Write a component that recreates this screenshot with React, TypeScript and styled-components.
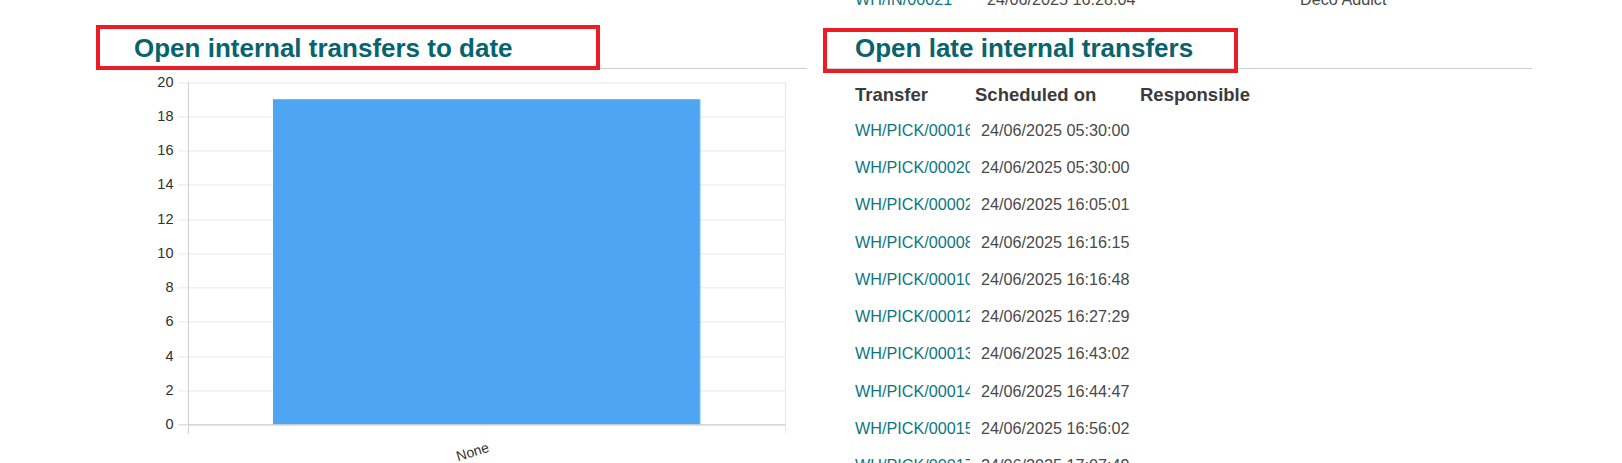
import styled, { createGlobalStyle } from "styled-components";

const GlobalStyle = createGlobalStyle`
  html, body {
    margin: 0;
    padding: 0;
    overflow: hidden;
    background: #fff;
  }
  body {
    font-family: "Liberation Sans", Arial, sans-serif;
    color: #444;
  }
`;

const TEAL = "#07646e";
const LINK = "#0b7782";

const transfers = [
  { ref: "WH/PICK/00016", date: "24/06/2025 05:30:00" },
  { ref: "WH/PICK/00020", date: "24/06/2025 05:30:00" },
  { ref: "WH/PICK/00002", date: "24/06/2025 16:05:01" },
  { ref: "WH/PICK/00008", date: "24/06/2025 16:16:15" },
  { ref: "WH/PICK/00010", date: "24/06/2025 16:16:48" },
  { ref: "WH/PICK/00012", date: "24/06/2025 16:27:29" },
  { ref: "WH/PICK/00013", date: "24/06/2025 16:43:02" },
  { ref: "WH/PICK/00014", date: "24/06/2025 16:44:47" },
  { ref: "WH/PICK/00015", date: "24/06/2025 16:56:02" },
  { ref: "WH/PICK/00017", date: "24/06/2025 17:07:49" },
];

export default function App() {
  return (
    <>
      <GlobalStyle />
      <Page>
        <div />
        <PrevRow>
          <Ref href="#">WH/IN/00021</Ref>
          <DateCell>24/06/2025 16:28:04</DateCell>
          <span>Deco Addict</span>
        </PrevRow>

        <Section>
          <Heading $indent={38}>Open internal transfers to date</Heading>
          <Highlight $top={7.5} $left={0} $w={504} $h={45} />
          <BarChart value={19} label="None" />
        </Section>

        <Section>
          <Heading $indent={33}>Open late internal transfers</Heading>
          <Highlight $top={10.5} $left={1} $w={415} $h={44.5} />
          <Table>
            <HeadRow>
              <span>Transfer</span>
              <span>Scheduled on</span>
              <span>Responsible</span>
            </HeadRow>
            {transfers.map((t) => (
              <BodyRow key={t.ref}>
                <Ref href="#">{t.ref}</Ref>
                <DateCell>{t.date}</DateCell>
                <span />
              </BodyRow>
            ))}
          </Table>
        </Section>
      </Page>
    </>
  );
}

function BarChart(props: { value: number; label: string }) {
  // page coordinates, the viewBox starts where the chart block starts
  const zeroY = 424;
  const step = (424 - 81.7) / 20;
  const ticks = [0, 2, 4, 6, 8, 10, 12, 14, 16, 18, 20];
  const barTop = zeroY - props.value * step;

  return (
    <ChartSvg viewBox="96 68.6 711 395" width={711} height={395}>
      {ticks.map((t) => {
        const y = Math.round(zeroY - t * step) + 0.5;
        return (
          <g key={t}>
            <line x1={178} x2={785.5} y1={y} y2={y} stroke={t === 0 ? "#d2d2d2" : "#e8e8e8"} />
            <text x={173.5} y={y + 0.5} textAnchor="end" dominantBaseline="middle" fontSize={14.5} fill="#2f2f2f">
              {t}
            </text>
          </g>
        );
      })}
      <rect x={273} y={barTop} width={427} height={zeroY - barTop} fill="#4ea6f2" />
      <line x1={700} x2={700} y1={barTop} y2={zeroY} stroke="#7dbdf5" />
      <line x1={188.5} x2={188.5} y1={81.7} y2={433} stroke="#d0d0d0" />
      <line x1={785.5} x2={785.5} y1={81.7} y2={433} stroke="#e6e6e6" />
      <line x1={188.5} x2={785.5} y1={424.5} y2={424.5} stroke="#d2d2d2" />
      <text x={490} y={451} textAnchor="end" fontSize={14} fill="#2f2f2f" transform="rotate(-17 490 451)">
        {props.label}
      </text>
    </ChartSvg>
  );
}

const Page = styled.div`
  display: grid;
  grid-template-columns: 711px 710px;
  column-gap: 15px;
  padding-left: 96px;
  margin-top: -19.5px;
`;

const Section = styled.section`
  position: relative;
`;

const Heading = styled.h3<{ $indent: number }>`
  margin: 0;
  padding: 15.5px 0 3.5px ${(p) => p.$indent}px;
  font-size: 26px;
  line-height: 1.2;
  font-weight: bold;
  color: ${TEAL};
  border-bottom: 1px solid #cfcfcf;
`;

const Highlight = styled.div<{ $top: number; $left: number; $w: number; $h: number }>`
  position: absolute;
  top: ${(p) => p.$top}px;
  left: ${(p) => p.$left}px;
  width: ${(p) => p.$w}px;
  height: ${(p) => p.$h}px;
  box-sizing: border-box;
  border: 4px solid #ec1c24;
  pointer-events: none;
`;

const ChartSvg = styled.svg`
  display: block;
  font-family: "Liberation Sans", Arial, sans-serif;
`;

const Table = styled.div`
  margin: 10px 0 0 33px;
`;

const HeadRow = styled.div`
  display: grid;
  grid-template-columns: 120px 165px 1fr;
  align-items: center;
  height: 33px;
  font-size: 18.5px;
  font-weight: bold;
  color: #3b3b3b;
`;

const BodyRow = styled.div`
  display: grid;
  grid-template-columns: 120px 165px 1fr;
  align-items: center;
  height: 37.25px;
  font-size: 16.2px;
`;

const PrevRow = styled.div`
  display: grid;
  grid-template-columns: 126px 319px 1fr;
  align-items: center;
  height: 37px;
  padding-left: 33px;
  font-size: 16.2px;
  color: #4a4a4a;
`;

const Ref = styled.a`
  display: block;
  width: 115px;
  overflow: hidden;
  white-space: nowrap;
  color: ${LINK};
  text-decoration: none;
`;

const DateCell = styled.span`
  padding-left: 6px;
  white-space: nowrap;
  color: #4a4a4a;
`;
